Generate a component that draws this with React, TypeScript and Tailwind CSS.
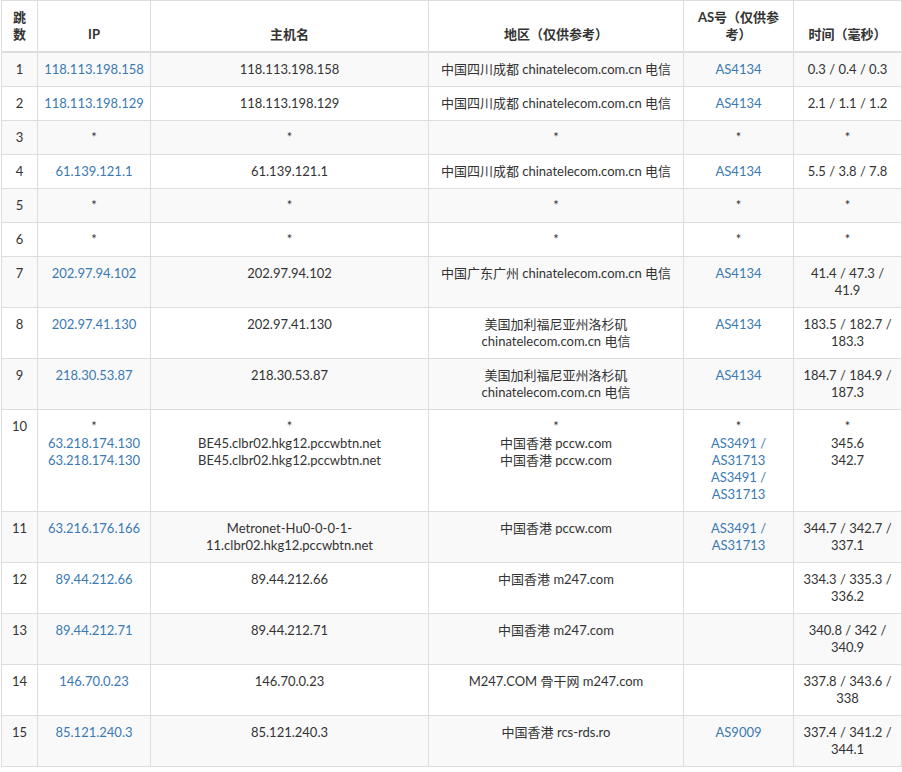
import React from 'react';

type Row = { n: number; ip: string[]; host: string[]; loc: string[]; as: string[]; time: string };

const rows: Row[] = [
  { n: 1, ip: ['118.113.198.158'], host: ['118.113.198.158'], loc: ['中国四川成都 chinatelecom.com.cn 电信'], as: ['AS4134'], time: '0.3 / 0.4 / 0.3' },
  { n: 2, ip: ['118.113.198.129'], host: ['118.113.198.129'], loc: ['中国四川成都 chinatelecom.com.cn 电信'], as: ['AS4134'], time: '2.1 / 1.1 / 1.2' },
  { n: 3, ip: ['*'], host: ['*'], loc: ['*'], as: ['*'], time: '*' },
  { n: 4, ip: ['61.139.121.1'], host: ['61.139.121.1'], loc: ['中国四川成都 chinatelecom.com.cn 电信'], as: ['AS4134'], time: '5.5 / 3.8 / 7.8' },
  { n: 5, ip: ['*'], host: ['*'], loc: ['*'], as: ['*'], time: '*' },
  { n: 6, ip: ['*'], host: ['*'], loc: ['*'], as: ['*'], time: '*' },
  { n: 7, ip: ['202.97.94.102'], host: ['202.97.94.102'], loc: ['中国广东广州 chinatelecom.com.cn 电信'], as: ['AS4134'], time: '41.4 / 47.3 / 41.9' },
  { n: 8, ip: ['202.97.41.130'], host: ['202.97.41.130'], loc: ['美国加利福尼亚州洛杉矶 chinatelecom.com.cn 电信'], as: ['AS4134'], time: '183.5 / 182.7 / 183.3' },
  { n: 9, ip: ['218.30.53.87'], host: ['218.30.53.87'], loc: ['美国加利福尼亚州洛杉矶 chinatelecom.com.cn 电信'], as: ['AS4134'], time: '184.7 / 184.9 / 187.3' },
  { n: 10, ip: ['*', '63.218.174.130', '63.218.174.130'], host: ['*', 'BE45.clbr02.hkg12.pccwbtn.net', 'BE45.clbr02.hkg12.pccwbtn.net'], loc: ['*', '中国香港 pccw.com', '中国香港 pccw.com'], as: ['*', 'AS3491 / AS31713', 'AS3491 / AS31713'], time: '*\n345.6\n342.7' },
  { n: 11, ip: ['63.216.176.166'], host: ['Metronet-Hu0-0-0-1-11.clbr02.hkg12.pccwbtn.net'], loc: ['中国香港 pccw.com'], as: ['AS3491 / AS31713'], time: '344.7 / 342.7 / 337.1' },
  { n: 12, ip: ['89.44.212.66'], host: ['89.44.212.66'], loc: ['中国香港 m247.com'], as: [], time: '334.3 / 335.3 / 336.2' },
  { n: 13, ip: ['89.44.212.71'], host: ['89.44.212.71'], loc: ['中国香港 m247.com'], as: [], time: '340.8 / 342 / 340.9' },
  { n: 14, ip: ['146.70.0.23'], host: ['146.70.0.23'], loc: ['M247.COM 骨干网 m247.com'], as: [], time: '337.8 / 343.6 / 338' },
  { n: 15, ip: ['85.121.240.3'], host: ['85.121.240.3'], loc: ['中国香港 rcs-rds.ro'], as: ['AS9009'], time: '337.4 / 341.2 / 344.1' },
];

const link = 'text-[#3a79b3]';
const cell = 'border border-[#ddd] px-[6px] py-2 align-top text-center';
const head = 'border border-[#ddd] border-b-2 px-[6px] py-2 align-bottom';

function Lines({ items, cls }: { items: string[]; cls?: string }) {
  return (
    <>
      {items.map((t, i) => (
        <div key={i} className={t === '*' ? 'text-[#333]' : cls}>{t}</div>
      ))}
    </>
  );
}

export default function App() {
  return (
    <div className="bg-white pl-px" style={{ fontFamily: 'Lato, "Noto Sans CJK SC", sans-serif' }}>
      <table className="w-[900px] border-collapse table-fixed text-[13px] leading-[17px] text-[#333]">
        <colgroup>
          <col className="w-[36px]" />
          <col className="w-[113px]" />
          <col className="w-[278px]" />
          <col className="w-[255px]" />
          <col className="w-[110px]" />
          <col className="w-[108px]" />
        </colgroup>
        <thead>
          <tr className="font-bold">
            <th className="border border-[#ddd] border-b-2 px-1 py-2 align-bottom">跳<br />数</th>
            <th className={head}>IP</th>
            <th className={head}>主机名</th>
            <th className={head}>地区（仅供参考）</th>
            <th className={head}>AS号（仅供参考）</th>
            <th className={head}>时间（毫秒）</th>
          </tr>
        </thead>
        <tbody>
          {rows.map((r) => (
            <tr key={r.n} className={r.n % 2 === 1 ? 'bg-[#f9f9f9]' : 'bg-white'}>
              <td className="border border-[#ddd] px-1 py-2 align-top text-center">{r.n}</td>
              <td className={cell}><Lines items={r.ip} cls={link} /></td>
              <td className={cell}><Lines items={r.host} /></td>
              <td className={cell}><Lines items={r.loc} /></td>
              <td className={cell}><Lines items={r.as} cls={link} /></td>
              <td className={cell + ' whitespace-pre-line'}>{r.time}</td>
            </tr>
          ))}
        </tbody>
      </table>
    </div>
  );
}
